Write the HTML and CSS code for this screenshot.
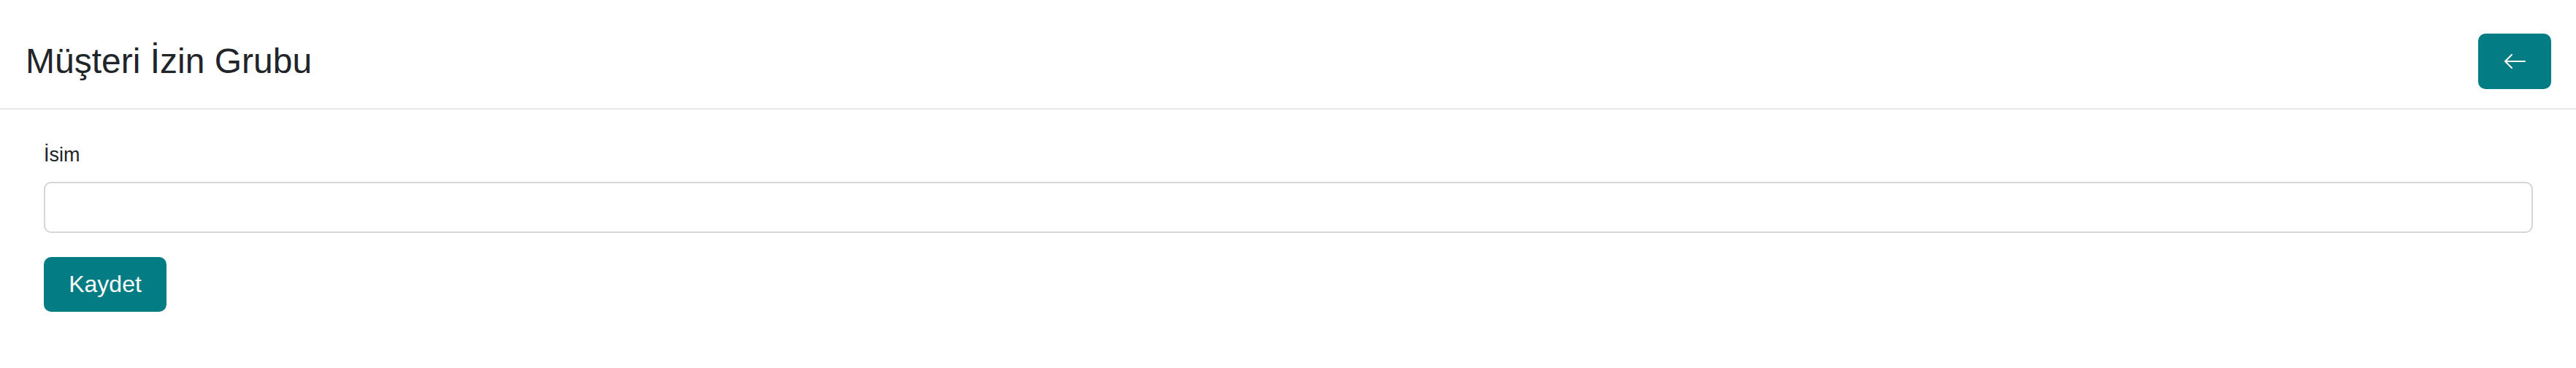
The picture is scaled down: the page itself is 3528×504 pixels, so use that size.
FILE: index.html
```html
<!DOCTYPE html>
<html lang="tr">
<head>
<meta charset="UTF-8">
<meta name="viewport" content="width=device-width, initial-scale=1.0">
<title>Müşteri İzin Grubu</title>
<link rel="stylesheet" href="styles.css">
</head>
<body>
  <div class="page-header">
    <h1 class="page-title">Müşteri İzin Grubu</h1>
    <a href="#" class="btn btn-back" title="Geri">
      <svg width="30" height="20" viewBox="0 0 30 20" fill="none" stroke="#fff" stroke-width="2" stroke-linecap="round" stroke-linejoin="round">
        <path d="M2 10 H29"/>
        <path d="M11 1 L2 10 L11 19"/>
      </svg>
    </a>
  </div>

  <div class="content">
    <form id="groupForm">
      <label for="name" class="form-label">İsim</label>
      <input type="text" id="name" name="name" class="form-input">
      <button type="submit" class="btn btn-save">Kaydet</button>
    </form>
  </div>
</body>
</html>
```

FILE: styles.css
```css
  body {
    font-family: "Liberation Sans", Arial, sans-serif;
    background-color: #fff;
    color: #212529;
    margin: 0;
    padding: 0;
  }

  .page-header {
    display: flex;
    justify-content: space-between;
    align-items: center;
    padding: 46px 34px 26px 35px;
    border-bottom: 2px solid #e8e8e8;
  }

  .page-title {
    margin: 0;
    font-size: 48px;
    font-weight: 400;
    line-height: 1.2;
  }

  .btn {
    display: flex;
    align-items: center;
    justify-content: center;
    background-color: #047c84;
    color: #fff;
    border: none;
    border-radius: 10px;
    text-decoration: none;
    cursor: pointer;
  }

  .btn-back {
    width: 100px;
    height: 76px;
  }

  .content {
    padding: 42px 59px 0 60px;
  }

  .form-label {
    display: block;
    font-size: 27px;
    line-height: 40px;
    margin-bottom: 17px;
  }

  .form-input {
    display: block;
    width: 100%;
    height: 70px;
    box-sizing: border-box;
    border: 2px solid #d6d6d6;
    border-radius: 10px;
    padding: 0 20px;
    font-size: 27px;
    font-family: inherit;
  }

  .btn-save {
    margin-top: 33px;
    width: 168px;
    height: 75px;
    padding: 0;
    font-family: inherit;
    font-size: 32px;
  }
```
